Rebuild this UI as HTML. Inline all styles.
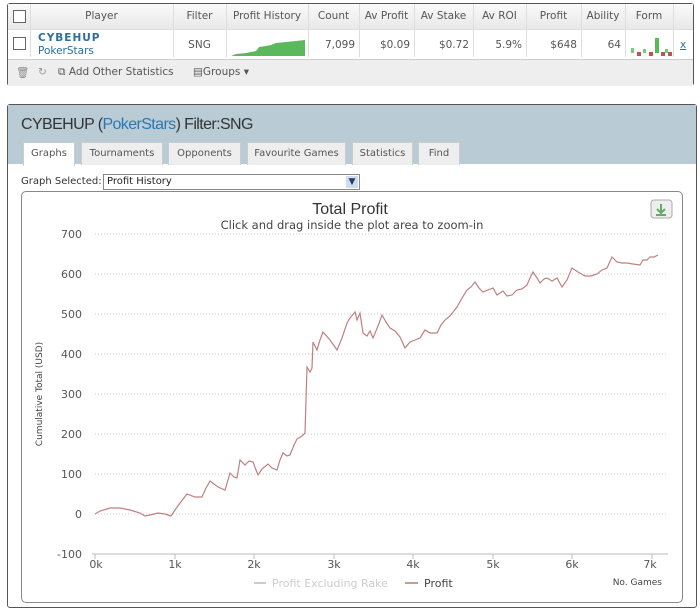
<!DOCTYPE html>
<html><head><meta charset="utf-8"><style>
body{margin:0;width:700px;height:612px;background:#fff;font-family:"DejaVu Sans","Liberation Sans",sans-serif;position:relative;overflow:hidden}
.abs{position:absolute}
.tbl{left:7px;top:3px;width:685px;height:81px;border:1px solid #555;border-radius:3px;background:#fff}
.hdr{left:0;top:0;width:685px;height:25px;background:linear-gradient(#fafafa,#e8e8e8);border-bottom:1px solid #ddd}
.cell{position:absolute;font-size:10.5px;color:#555;text-align:center}
.vl{position:absolute;top:0;height:53px;border-left:1px solid #ddd}
.cb{position:absolute;width:11px;height:11px;border:1px solid #666;background:#fff}
.foot{left:0;top:55px;width:685px;height:26px;background:#eee;border-top:1px solid #ccc;font-size:10.5px;color:#555}
.dlg{left:7px;top:104px;width:688px;height:502px;border:1px solid #555;border-radius:3px;background:#fff}
.head{left:0;top:0;width:688px;height:59px;background:#b9ccd5}
.tab{position:absolute;top:37px;height:22px;background:#eee;border:1px solid #ccc;border-bottom:none;font-size:10px;color:#555;line-height:22px;text-align:center}
.chart{left:13px;top:86px;width:660px;height:410px;border:1px solid #888;border-radius:5px}
</style></head><body>
<div class="abs tbl">
 <div class="abs hdr"></div>
 <div class="cb" style="left:5px;top:6px"></div>
 <div class="cb" style="left:5px;top:33px"></div>
 <div class="vl" style="left:22px"></div><div class="vl" style="left:165px"></div><div class="vl" style="left:218px"></div><div class="vl" style="left:300px"></div><div class="vl" style="left:351px"></div><div class="vl" style="left:406px"></div><div class="vl" style="left:465px"></div><div class="vl" style="left:518px"></div><div class="vl" style="left:573px"></div><div class="vl" style="left:617px"></div><div class="vl" style="left:665px"></div>
 <div class="cell" style="left:22px;width:143px;top:6px">Player</div>
 <div class="cell" style="left:165px;width:53px;top:6px">Filter</div>
 <div class="cell" style="left:218px;width:82px;top:6px">Profit History</div>
 <div class="cell" style="left:300px;width:51px;top:6px">Count</div>
 <div class="cell" style="left:351px;width:55px;top:6px">Av Profit</div>
 <div class="cell" style="left:406px;width:59px;top:6px">Av Stake</div>
 <div class="cell" style="left:465px;width:53px;top:6px">Av ROI</div>
 <div class="cell" style="left:518px;width:55px;top:6px">Profit</div>
 <div class="cell" style="left:573px;width:44px;top:6px">Ability</div>
 <div class="cell" style="left:617px;width:48px;top:6px">Form</div>
 <div class="cell" style="left:30px;top:28px;text-align:left;color:#2b6fa0;font-weight:bold;letter-spacing:1px">CYBEHUP</div>
 <div class="cell" style="left:30px;top:41px;text-align:left;color:#2b6fa0">PokerStars</div>
 <div class="cell" style="left:165px;width:53px;top:35px">SNG</div>
 <svg class="abs" style="left:223px;top:34px" width="76" height="18"><path d="M0 18 L5 16 L15 15 L25 13 L28 9 L35 8 L40 7 L45 5 L55 4 L65 3 L74 2 L74 18Z" fill="#5cb85c"/></svg>
 <div class="cell" style="left:300px;width:47px;top:35px;text-align:right">7,099</div>
 <div class="cell" style="left:351px;width:51px;top:35px;text-align:right">$0.09</div>
 <div class="cell" style="left:406px;width:55px;top:35px;text-align:right">$0.72</div>
 <div class="cell" style="left:465px;width:49px;top:35px;text-align:right">5.9%</div>
 <div class="cell" style="left:518px;width:51px;top:35px;text-align:right">$648</div>
 <div class="cell" style="left:573px;width:40px;top:35px;text-align:right">64</div>
 <svg class="abs" style="left:622px;top:33px" width="42" height="20"><rect x="1" y="11" width="3" height="5" fill="#7c7"/><rect x="7" y="15" width="4" height="4" fill="#b55"/><rect x="13" y="12" width="3" height="4" fill="#7c7"/><rect x="19" y="15" width="4" height="4" fill="#b55"/><rect x="25" y="1" width="4" height="15" fill="#5b5"/><rect x="31" y="15" width="4" height="4" fill="#b55"/><rect x="35" y="12" width="3" height="4" fill="#7c7"/><rect x="38" y="15" width="4" height="4" fill="#b55"/></svg>
 <div class="cell" style="left:672px;top:35px;color:#2b6fa0;text-decoration:underline">x</div>
 <div class="abs foot"><span class="abs" style="left:8px;top:6px;color:#888">🗑</span><span class="abs" style="left:30px;top:6px;color:#999">↻</span><span class="abs" style="left:50px;top:6px">⧉ Add Other Statistics</span><span class="abs" style="left:185px;top:6px">▤Groups ▾</span></div>
</div>
<div class="abs" style="left:685px;top:106px;font-size:12px;font-weight:bold">✖</div>
<div class="abs dlg">
 <div class="abs head"></div>
 <div class="abs" style="left:13px;top:11px;font-family:'Liberation Sans',sans-serif;font-size:16px;letter-spacing:-0.6px;color:#333">CYBEHUP (<span style="color:#2b78b0">PokerStars</span>) Filter:SNG</div>
 <div class="tab" style="left:15px;width:50px;background:#fff;height:23px">Graphs</div>
 <div class="tab" style="left:73px;width:80px">Tournaments</div>
 <div class="tab" style="left:160px;width:71px">Opponents</div>
 <div class="tab" style="left:239px;width:97px">Favourite Games</div>
 <div class="tab" style="left:344px;width:59px">Statistics</div>
 <div class="tab" style="left:410px;width:40px">Find</div>
 <div class="abs" style="left:13px;top:71px;font-size:10px;color:#333">Graph Selected:</div>
 <div class="abs" style="left:95px;top:69px;width:252px;height:14px;border:1px solid #888;font-size:10px;line-height:14px;padding-left:3px;color:#222">Profit History<span class="abs" style="right:1px;top:1px;width:12px;height:12px;background:#cde;color:#336;font-size:9px;text-align:center;line-height:12px">▼</span></div>
 <div class="abs chart"></div>
</div>
<svg class="abs" style="left:0;top:0" width="700" height="612" font-family="DejaVu Sans, sans-serif">
 <text x="350" y="214" font-size="16" fill="#333" text-anchor="middle" font-family="Liberation Sans, sans-serif">Total Profit</text>
 <text x="352" y="229" font-size="11.5" fill="#444" text-anchor="middle">Click and drag inside the plot area to zoom-in</text>
 <rect x="651" y="200" width="21" height="18" rx="3" fill="#eee" stroke="#aaa"/>
 <path d="M661 204v8M657 209l4 4 4-4M656 215h10" stroke="#6a6" stroke-width="2" fill="none"/>
 <g stroke="#ccc" stroke-dasharray="1,2">
  <line x1="95" y1="234" x2="668" y2="234"/><line x1="95" y1="274" x2="668" y2="274"/><line x1="95" y1="314" x2="668" y2="314"/><line x1="95" y1="354" x2="668" y2="354"/><line x1="95" y1="394" x2="668" y2="394"/><line x1="95" y1="434" x2="668" y2="434"/><line x1="95" y1="474" x2="668" y2="474"/><line x1="95" y1="514" x2="668" y2="514"/>
 </g>
 <line x1="92" y1="554" x2="668" y2="554" stroke="#bbb"/>
 <g stroke="#bbb"><line x1="95" y1="554" x2="95" y2="559"/><line x1="175" y1="554" x2="175" y2="559"/><line x1="254" y1="554" x2="254" y2="559"/><line x1="334" y1="554" x2="334" y2="559"/><line x1="413" y1="554" x2="413" y2="559"/><line x1="493" y1="554" x2="493" y2="559"/><line x1="572" y1="554" x2="572" y2="559"/><line x1="652" y1="554" x2="652" y2="559"/></g>
 <g font-size="11" fill="#555" text-anchor="end">
  <text x="82" y="238">700</text><text x="82" y="278">600</text><text x="82" y="318">500</text><text x="82" y="358">400</text><text x="82" y="398">300</text><text x="82" y="438">200</text><text x="82" y="478">100</text><text x="82" y="518">0</text><text x="82" y="558">-100</text>
 </g>
 <g font-size="11" fill="#555" text-anchor="middle">
  <text x="96" y="568">0k</text><text x="175" y="568">1k</text><text x="254" y="568">2k</text><text x="334" y="568">3k</text><text x="413" y="568">4k</text><text x="493" y="568">5k</text><text x="572" y="568">6k</text><text x="650" y="568">7k</text>
 </g>
 <text x="42" y="394" font-size="9" fill="#444" text-anchor="middle" transform="rotate(-90 42 394)">Cumulative Total (USD)</text>
 <line x1="254" y1="583" x2="266" y2="583" stroke="#ccc" stroke-width="2"/>
 <text x="272" y="587" font-size="11" fill="#ccc">Profit Excluding Rake</text>
 <line x1="405" y1="583" x2="418" y2="583" stroke="#c99" stroke-width="2"/>
 <text x="424" y="587" font-size="11" fill="#444">Profit</text>
 <text x="662" y="585" font-size="9" fill="#444" text-anchor="end">No. Games</text>
 <polyline fill="none" stroke="#c08080" stroke-width="1.2" points="95,514 100,511 110,508 120,508 130,510 140,513 145,516 150,515 158,513 165,514 171,516 175,510 180,503 187,494 195,497 202,497 206,488 210,481 218,487 225,490 228,480 230,473 234,477 237,478 240,460 245,465 249,461 253,462 256,470 258,475 262,469 268,464 272,468 277,470 280,460 283,453 287,456 290,455 294,445 297,439 302,436 305,433 306,400 307,367 310,372 312,368 313,342 317,350 320,340 323,332 330,340 337,350 342,338 347,323 350,318 355,312 357,320 360,313 363,333 367,336 370,331 373,338 378,326 382,315 386,322 390,328 395,331 400,337 405,348 410,342 415,340 420,338 425,330 430,333 437,333 441,325 445,320 450,316 457,307 462,298 467,290 471,287 475,282 479,288 483,292 488,290 493,288 497,295 503,291 507,296 512,295 517,290 522,289 527,285 530,278 533,272 537,278 540,283 544,279 547,278 552,281 557,278 562,287 567,280 572,268 578,272 585,276 591,276 597,274 602,270 607,268 612,257 617,262 622,263 627,263 633,264 640,265 643,260 647,260 650,257 654,257 658,255"/>
</svg>
</body></html>
